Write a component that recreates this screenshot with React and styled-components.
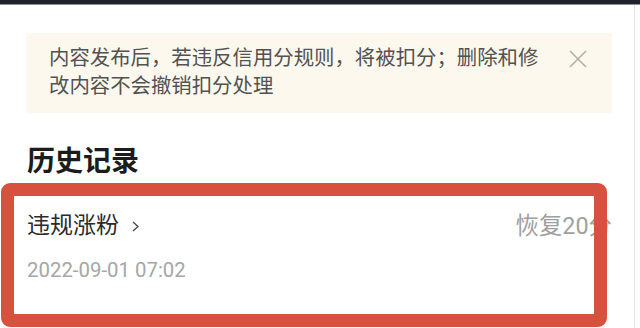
import React from "react";
import styled, { createGlobalStyle } from "styled-components";

const Global = createGlobalStyle`
  html, body { margin: 0; padding: 0; background: #ffffff; overflow: hidden; }
  body { font-family: Roboto, "Noto Sans CJK SC", sans-serif; }
  #root { height: 328px; }
`;

const Screen = styled.div`
  height: 328px;
  display: flex;
  flex-direction: column;
  background: #fff;
`;

const StatusBar = styled.div`
  height: 4px;
  background: #22222d;
  border-bottom: 1px solid #8e8e94;
  flex: none;
`;

const Body = styled.div`
  flex: 1;
  display: flex;
  min-height: 0;
`;

const Main = styled.main`
  flex: 1;
  padding: 28px 22px 0 27px;
  display: flex;
  flex-direction: column;
`;

const Edge = styled.div`
  width: 5px;
  border-left: 1px solid #e4e4e4;
  flex: none;
`;

const Notice = styled.div`
  display: flex;
  align-items: flex-start;
  gap: 24px;
  margin-left: -1px;
  padding: 11px 25px 13px 23px;
  background: #fdf8ee;
  border-radius: 2px;
`;

const NoticeText = styled.p`
  flex: 1;
  margin: 0;
  font-size: 20.4px;
  line-height: 28px;
  color: #525252;
`;

const CloseButton = styled.button`
  flex: none;
  width: 18px;
  height: 18px;
  margin-top: 6px;
  padding: 0;
  border: 0;
  background: none;
  display: flex;
  align-items: center;
  justify-content: center;
`;

const Heading = styled.h2`
  margin: 29px 0 0;
  font-size: 28px;
  line-height: 40px;
  font-weight: 700;
  color: #1c1c1c;
`;

const Record = styled.div`
  position: relative;
  margin-top: 1px;
  padding: 27px 0 43px;
  display: flex;
  flex-direction: column;
  gap: 14px;
`;

const RecordTop = styled.div`
  display: flex;
  align-items: center;
  justify-content: space-between;
`;

const Title = styled.div`
  display: flex;
  align-items: center;
  gap: 13px;
  font-size: 23px;
  line-height: 32px;
  color: #2b2b2b;
`;

const Amount = styled.div`
  font-size: 23.4px;
  line-height: 32px;
  color: #a0a0a0;
`;

const DateText = styled.div`
  font-size: 20.4px;
  line-height: 28px;
  color: #a6a6a6;
`;

const Highlight = styled.div`
  position: absolute;
  top: 0;
  bottom: 0;
  left: -26px;
  right: 5px;
  border: 13px solid #d6523f;
  border-radius: 9px;
  pointer-events: none;
`;

export default function App() {
  return (
    <>
      <Global />
      <Screen>
        <StatusBar />
        <Body>
          <Main>
            <Notice>
              <NoticeText>
                内容发布后，若违反信用分规则，将被扣分；删除和修改内容不会撤销扣分处理
              </NoticeText>
              <CloseButton aria-label="关闭">
                <svg width="18" height="18" viewBox="0 0 18 18">
                  <path
                    d="M1 1 L17 17 M17 1 L1 17"
                    stroke="#b3afa9"
                    strokeWidth="1.6"
                    fill="none"
                  />
                </svg>
              </CloseButton>
            </Notice>
            <Heading>历史记录</Heading>
            <Record>
              <RecordTop>
                <Title>
                  违规涨粉
                  <svg width="7" height="11" viewBox="0 0 7 11">
                    <path
                      d="M1 1 L6 5.5 L1 10"
                      stroke="#4a4a4a"
                      strokeWidth="1.4"
                      fill="none"
                    />
                  </svg>
                </Title>
                <Amount>恢复20分</Amount>
              </RecordTop>
              <DateText>2022-09-01 07:02</DateText>
              <Highlight />
            </Record>
          </Main>
          <Edge />
        </Body>
      </Screen>
    </>
  );
}
